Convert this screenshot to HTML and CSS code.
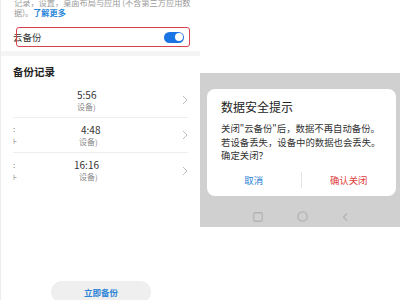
FILE: index.html
```html
<!DOCTYPE html>
<html lang="zh-CN">
<head>
    <meta charset="UTF-8">
    <meta name="viewport" content="width=device-width, initial-scale=1.0">
    <title>云备份</title>
    <link rel="stylesheet" href="styles.css">
</head>

<body>
    <div class="screen settings">
        <p class="intro">记录，设置，桌面布局与应用 (不含第三方应用数<br>据)。<span class="link">了解更多</span></p>

        <div class="switch-row">
            <span class="label">云备份</span>
            <span class="toggle"><span class="knob"></span></span>
        </div>

        <div class="band"></div>

        <h3 class="section-title">备份记录</h3>

        <div class="record">
            <div class="stub"></div>
            <div class="info">
                <div class="time">5:56</div>
                <div class="sub">设备)</div>
            </div>
            <svg class="chevron" width="6" height="10" viewBox="0 0 6 10"><polyline points="1,1 5,5 1,9" fill="none" stroke="#bdbdbd" stroke-width="1"/></svg>
        </div>

        <div class="record">
            <div class="stub"><span>:</span><span>⊦</span></div>
            <div class="info">
                <div class="time nudge-right">4:48</div>
                <div class="sub nudge-sub">设备)</div>
            </div>
            <svg class="chevron" width="6" height="10" viewBox="0 0 6 10"><polyline points="1,1 5,5 1,9" fill="none" stroke="#bdbdbd" stroke-width="1"/></svg>
        </div>

        <div class="record last">
            <div class="stub"><span>:</span><span>⊦</span></div>
            <div class="info">
                <div class="time nudge-left">16:16</div>
                <div class="sub nudge-sub">设备)</div>
            </div>
            <svg class="chevron" width="6" height="10" viewBox="0 0 6 10"><polyline points="1,1 5,5 1,9" fill="none" stroke="#bdbdbd" stroke-width="1"/></svg>
        </div>

        <button class="backup-btn">立即备份</button>
    </div>

    <div class="screen dialog-screen">
        <div class="scrim">
            <div class="dialog">
                <h3 class="dialog-title">数据安全提示</h3>
                <p class="dialog-text">关闭"云备份"后，数据不再自动备份。<br>若设备丢失，设备中的数据也会丢失。<br>确定关闭？</p>
                <div class="actions">
                    <span class="action cancel">取消</span>
                    <span class="action confirm">确认关闭</span>
                </div>
            </div>

            <div class="navbar">
                <svg width="10" height="10" viewBox="0 0 10 10"><rect x="0.75" y="0.75" width="8.5" height="8.5" rx="1.5" fill="none" stroke="#b3b3b3" stroke-width="1.3"/></svg>
                <svg width="11" height="11" viewBox="0 0 11 11"><circle cx="5.5" cy="5.5" r="4.7" fill="none" stroke="#b3b3b3" stroke-width="1.3"/></svg>
                <svg width="6" height="10" viewBox="0 0 6 10"><polyline points="5,1.5 1.5,5 5,8.5" fill="none" stroke="#b3b3b3" stroke-width="1.3"/></svg>
            </div>
        </div>
    </div>
</body>
</html>
```

FILE: styles.css
```css
body {
    margin: 0;
    width: 400px;
    height: 300px;
    overflow: hidden;
    display: flex;
    background: #ffffff;
    font-family: "Noto Sans CJK SC", "Noto Sans", sans-serif;
    color: #333;
}

.screen {
    height: 300px;
    box-sizing: border-box;
}

/* left: cloud backup settings */
.settings {
    width: 200px;
    border-left: 1px solid #ececec;
    display: flex;
    flex-direction: column;
}

.intro {
    margin: -3px 0 0 13px;
    font-size: 8.2px;
    line-height: 10px;
    color: #9a9a9a;
    white-space: nowrap;
}

.link {
    color: #2a86d8;
    font-weight: bold;
}

.switch-row {
    position: relative;
    height: 20px;
    margin-top: 10px;
    padding: 0 16px 0 12px;
    display: flex;
    align-items: center;
    justify-content: space-between;
}

/* red annotation frame drawn over the row */
.switch-row::after {
    content: "";
    position: absolute;
    top: 0;
    bottom: 0;
    left: 15px;
    right: 10px;
    border: 1px solid #d9434f;
    border-radius: 3px;
}

.label {
    font-size: 9.5px;
    color: #333;
}

.toggle {
    width: 20px;
    height: 11px;
    border-radius: 6px;
    background: #1b74e4;
    display: flex;
    justify-content: flex-end;
    align-items: center;
    padding: 0 1.5px;
    box-sizing: border-box;
}

.knob {
    width: 8px;
    height: 8px;
    border-radius: 50%;
    background: #fff;
}

.band {
    height: 5px;
    margin-top: 4px;
    background: #f4f4f4;
}

.section-title {
    margin: 9px 0 0 12px;
    font-size: 10.5px;
    line-height: 14px;
    color: #222;
}

.record {
    height: 35px;
    margin: 4px 12px 0 12px;
    border-bottom: 1px solid #eeeeee;
    display: grid;
    grid-template-columns: 64px 1fr 6px;
    align-items: center;
    box-sizing: border-box;
}

.record + .record {
    margin-top: 0;
}

.record.last {
    border-bottom: none;
}

.stub {
    display: flex;
    flex-direction: column;
    font-size: 8px;
    line-height: 12px;
    color: #777;
}

.info {
    display: flex;
    flex-direction: column;
}

.time {
    font-size: 10px;
    line-height: 12px;
    color: #333;
}

.sub {
    font-size: 8px;
    line-height: 11px;
    color: #8a8a8a;
}

.nudge-right {
    padding-left: 4px;
}

.nudge-left {
    margin-left: -3px;
}

.nudge-sub {
    padding-left: 2px;
}

.backup-btn {
    margin: auto 0 -3px 50px;
    width: 100px;
    height: 22px;
    border: none;
    border-radius: 11px;
    background: #efefef;
    color: #2c84d6;
    font-family: inherit;
    font-size: 8.5px;
    font-weight: bold;
    padding: 0;
}

/* right: confirm dialog */
.dialog-screen {
    width: 200px;
    padding-top: 73px;
}

.scrim {
    height: 154px;
    background: #d0d0d0;
    padding: 16px 4px 0 7px;
    box-sizing: border-box;
}

.dialog {
    background: #ffffff;
    border-radius: 8px;
    padding: 10px 0 6px 0;
}

.dialog-title {
    margin: 0 14px;
    font-size: 12px;
    line-height: 16px;
    font-weight: normal;
    color: #222;
}

.dialog-text {
    margin: 7px 0 0 14px;
    font-size: 9.4px;
    line-height: 13.5px;
    color: #333;
    white-space: nowrap;
}

.actions {
    margin-top: 7px;
    height: 20px;
    display: grid;
    grid-template-columns: 1fr 1fr;
    align-items: center;
}

.action {
    text-align: center;
    font-size: 9.4px;
    line-height: 16px;
}

.cancel {
    color: #2a7fd4;
    border-right: 1px solid #e4e4e4;
}

.confirm {
    color: #e0403d;
}

.navbar {
    margin-top: 11px;
    height: 20px;
    padding-left: 46px;
    display: flex;
    align-items: center;
    gap: 34px;
}
```
